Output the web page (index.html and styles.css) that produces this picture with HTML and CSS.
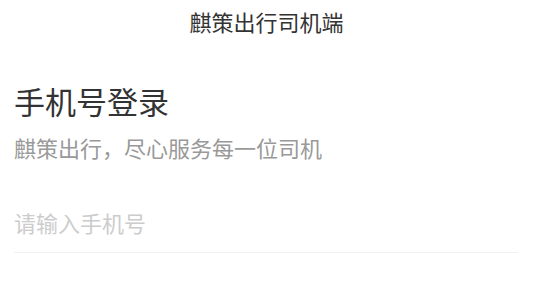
FILE: index.html
```html
<!DOCTYPE html>
<html lang="zh-CN">
<head>
<meta charset="utf-8">
<title>麒策出行司机端</title>
<link rel="stylesheet" href="styles.css">
</head>
<body>
<header class="nav">麒策出行司机端</header>
<main class="content">
  <h1 class="title">手机号登录</h1>
  <p class="subtitle">麒策出行，尽心服务每一位司机</p>
  <div class="field">
    <input class="phone" type="tel" placeholder="请输入手机号">
  </div>
</main>
</body>
</html>
```
FILE: styles.css
```css
html, body {
  margin: 0;
  padding: 0;
  background: #ffffff;
  font-family: "Noto Sans CJK SC", "Noto Sans", sans-serif;
}
.nav {
  height: 43px;
  line-height: 43px;
  text-align: center;
  font-size: 22px;
  color: #333333;
}
.content {
  padding: 0 15px 0 14px;
}
.title {
  margin: 38px 0 0;
  font-size: 31px;
  line-height: 40px;
  font-weight: normal;
  color: #333333;
}
.subtitle {
  margin: 11px 0 0;
  font-size: 22px;
  line-height: 31px;
  color: #999999;
}
.field {
  margin-top: 30px;
  height: 59px;
  border-bottom: 1px solid #f0f0f0;
  display: flex;
  align-items: center;
}
.phone {
  flex: 1;
  border: 0;
  outline: 0;
  padding: 0;
  margin: 0;
  background: transparent;
  font-family: inherit;
  font-size: 22px;
  line-height: 31px;
  color: #333333;
}
.phone::placeholder {
  color: #cccccc;
}
```
